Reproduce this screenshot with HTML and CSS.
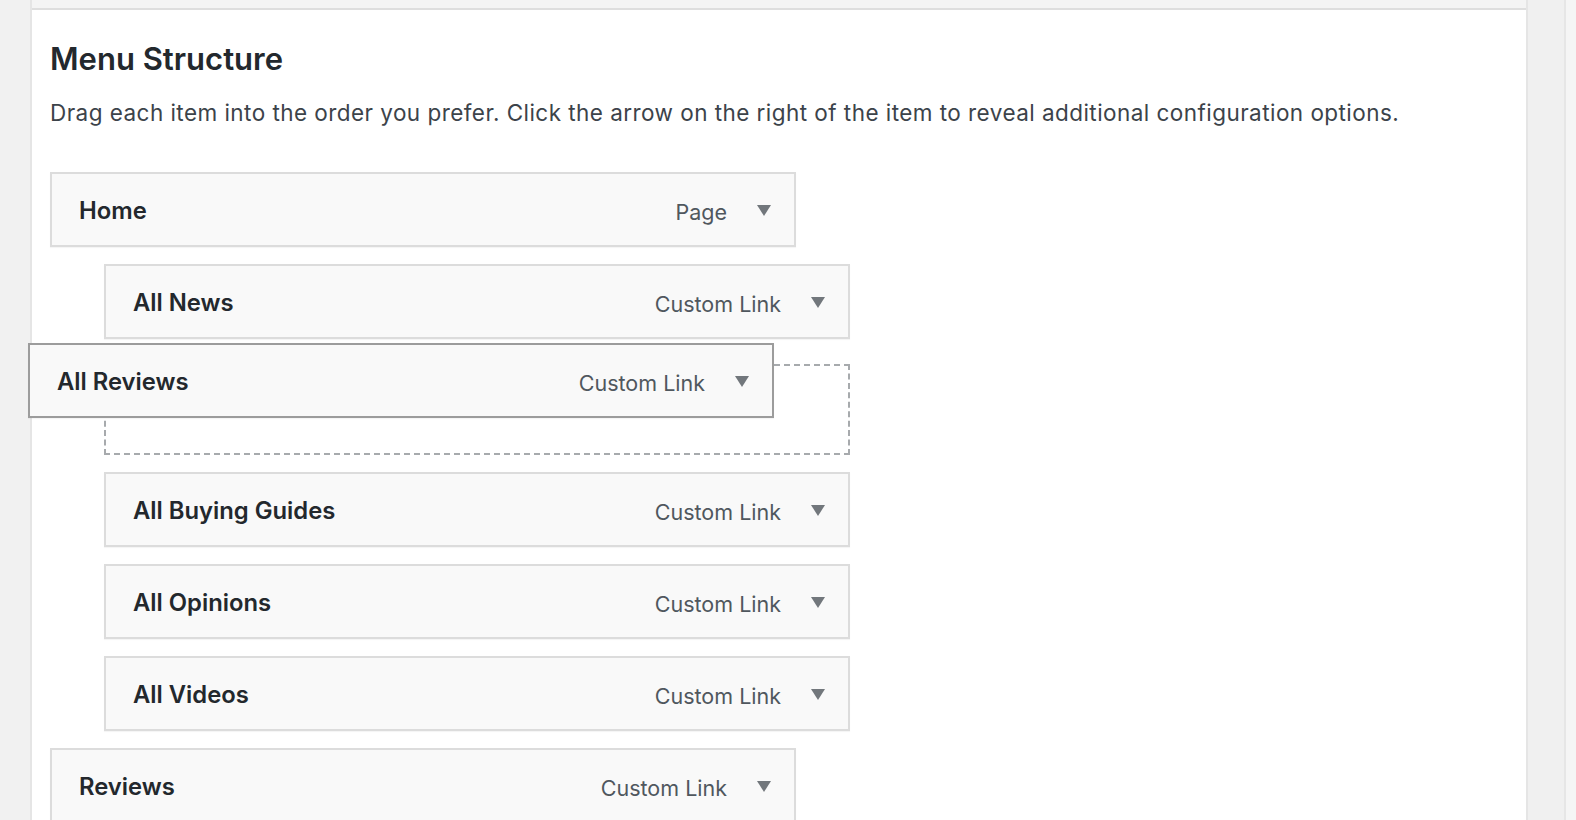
FILE: index.html
```html
<!DOCTYPE html>
<html>
<head>
<meta charset="utf-8">
<link rel="stylesheet" href="styles.css">
</head>
<body>
<div class="page">
  <div class="gutter"></div>
  <div class="panel">
    <div class="panel-top"></div>
    <div class="content">
      <h3 class="title">Menu Structure</h3>
      <p class="desc">Drag each item into the order you prefer. Click the arrow on the right of the item to reveal additional configuration options.</p>
      <ul class="menu">
        <li class="item depth-0"><span class="item-title">Home</span><span class="item-controls"><span class="item-type">Page</span><span class="arrow"></span></span></li>
        <li class="item depth-1"><span class="item-title">All News</span><span class="item-controls"><span class="item-type">Custom Link</span><span class="arrow"></span></span></li>
        <li class="placeholder depth-1"></li>
        <li class="item depth-1"><span class="item-title">All Buying Guides</span><span class="item-controls"><span class="item-type">Custom Link</span><span class="arrow"></span></span></li>
        <li class="item depth-1"><span class="item-title">All Opinions</span><span class="item-controls"><span class="item-type">Custom Link</span><span class="arrow"></span></span></li>
        <li class="item depth-1"><span class="item-title">All Videos</span><span class="item-controls"><span class="item-type">Custom Link</span><span class="arrow"></span></span></li>
        <li class="item depth-0"><span class="item-title">Reviews</span><span class="item-controls"><span class="item-type">Custom Link</span><span class="arrow"></span></span></li>
        <li class="item dragging"><span class="item-title">All Reviews</span><span class="item-controls"><span class="item-type">Custom Link</span><span class="arrow"></span></span></li>
      </ul>
    </div>
  </div>
  <div class="side"></div>
  <div class="edge"></div>
</div>
</body>
</html>
```
FILE: styles.css
```css
html, body {
  margin: 0;
  padding: 0;
  height: 100%;
  overflow: hidden;
}
body {
  background: #f1f1f1;
  font-family: Inter, "Noto Sans", "Liberation Sans", sans-serif;
  color: #23282d;
}
.page {
  display: flex;
  height: 820px;
}
.gutter {
  width: 30px;
  flex: none;
}
.panel {
  width: 1494px;
  flex: none;
  background: #fff;
  border-left: 2px solid #e5e5e5;
  border-right: 2px solid #e5e5e5;
}
.panel-top {
  height: 8px;
  background: #f4f4f4;
  border-bottom: 2px solid #dedede;
}
.content {
  padding: 0 18px;
  position: relative;
}
.title {
  margin: 0;
  padding-top: 31px;
  font-size: 31px;
  line-height: 36px;
  font-weight: 600;
  color: #23282d;
}
.desc {
  margin: 21px 0 0;
  font-size: 22.5px;
  letter-spacing: 0.45px;
  line-height: 30px;
  color: #3c434a;
}
.menu {
  list-style: none;
  margin: 0;
  padding: 0;
  padding-top: 44px;
}
.item {
  box-sizing: border-box;
  width: 746px;
  height: 75px;
  margin-bottom: 17px;
  background: #f9f9f9;
  border: 2px solid #dcdcdc;
  display: flex;
  align-items: center;
  justify-content: space-between;
  padding: 0 23px 0 27px;
  box-shadow: 0 1px 1px rgba(0,0,0,0.04);
}
.depth-1 {
  margin-left: 54px;
}
.item-title {
  font-size: 23.8px;
  font-weight: 600;
  color: #23282d;
  margin-top: 1px;
}
.item-controls {
  display: flex;
  align-items: center;
  gap: 30px;
  margin-top: 5px;
}
.item-type {
  font-size: 21.5px;
  color: #50575e;
}
.arrow {
  width: 0;
  height: 0;
  border-left: 7.5px solid transparent;
  border-right: 7.5px solid transparent;
  border-top: 11px solid #72777c;
  margin-top: -4px;
}
.placeholder {
  box-sizing: border-box;
  width: 746px;
  height: 91px;
  margin-top: 25px;
  margin-bottom: 17px;
  border: 2px dashed #a7aaad;
}
.dragging {
  position: absolute;
  left: -4px;
  top: 333px;
  margin: 0;
  border-color: #9c9c9c;
}
.side {
  width: 36px;
  flex: none;
  background: #f0f0f0;
}
.edge {
  flex: 1;
  background: #f5f5f5;
  border-left: 2px solid #e6e6e6;
}
```
